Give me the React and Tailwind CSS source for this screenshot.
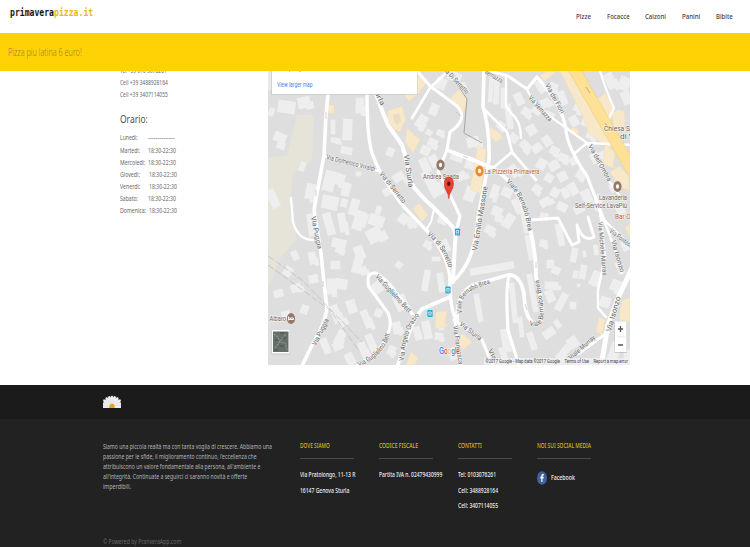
import React, { useLayoutEffect, useRef, useState } from "react";

// Text condensed horizontally to a given width.
function Fit({ w, className = "", children }) {
  const ref = useRef(null);
  const [scale, setScale] = useState(1);
  useLayoutEffect(() => {
    setScale(w / ref.current.offsetWidth);
  }, [w, children]);
  return (
    <span className={"block shrink-0 whitespace-pre " + className} style={{ width: w }}>
      <span ref={ref} className="inline-block origin-left" style={{ transform: `scaleX(${scale})` }}>
        {children}
      </span>
    </span>
  );
}

const nav = [["Pizze", 15], ["Focacce", 22.5], ["Calzoni", 21], ["Panini", 18], ["Bibite", 17]];

const hours = [
  ["Lunedì:", 18, "--------------", 27, 28],
  ["Martedì:", 20, "18:30-22:30", 28, 27.5],
  ["Mercoledì:", 25, "18:30-22:30", 28, 28],
  ["Giovedì:", 20, "18:30-22:30", 28, 28.5],
  ["Venerdì:", 20, "18:30-22:30", 28, 28.5],
  ["Sabato:", 18, "18:30-22:30", 28, 28],
  ["Domenica:", 26, "18:30-22:30", 28, 29],
];

// Buildings: x, y, width, height, angle
const buildings = [
  [270,75,9,11,0],[278,101,17,12,8],[269,108,5,8,20],[298,97,12,11,-12],[274,133,12,9,24],[277,142,8,7,20],
  [356,98,8,15,0],[331,120,4,14,0],[343,119,9,21,3],[331,138,9,5,8],[341,147,11,7,12],
  [324,171,11,20,14],[336,174,8,11,22],[342,183,8,13,14],[300,162,5,9,22],[306,184,9,15,12],[322,196,16,13,12],
  [350,199,8,16,17],[341,199,6,8,14],[269,189,8,19,-25],[387,148,7,8,22],[356,172,5,4,0],[376,206,5,8,16],
  [393,173,11,8,-32],[383,188,9,7,-30],[404,176,8,7,-34],[421,146,9,9,24],[417,115,9,13,34],[430,104,8,11,22],
  [426,130,6,5,32],[428,139,9,8,24],[421,158,8,15,-25],[430,155,8,12,-28],[424,171,8,15,-30],[430,184,13,12,-28],
  [436,78,10,11,20],[437,130,7,6,20],[448,72,13,9,25],[460,83,7,11,-28],
  [467,137,12,10,-12],[451,153,12,8,22],[466,157,9,12,18],[457,172,9,8,-30],[465,187,10,14,20],
  [489,75,4,27,4],[494,80,5,24,3],[501,88,4,20,0],[506,104,6,25,-8],[497,122,8,7,37],[509,134,9,8,40],
  [515,93,8,12,-25],[522,108,9,8,30],[527,125,9,10,-32],[532,108,9,6,35],[541,99,9,8,-25],[545,112,9,8,24],
  [537,80,8,13,-30],[549,83,8,9,28],[559,91,7,14,-20],[569,78,7,13,-24],[575,100,8,12,28],[570,116,8,10,-30],
  [582,118,10,9,25],[587,130,9,9,22],[591,153,8,10,-27],[600,151,9,13,-28],[605,137,6,7,0],[615,111,8,12,-27],
  [622,91,9,13,-24],[606,73,9,16,-27],[619,77,11,13,22],[570,157,7,8,-28],[577,169,8,10,30],[569,183,8,12,-28],
  [582,190,9,13,-25],[594,195,8,13,28],[610,184,6,8,-28],[616,203,8,12,-28],
  [520,142,11,8,45],[532,144,10,8,-38],[543,136,8,10,-35],[550,147,9,8,28],[537,159,9,10,30],[549,161,10,9,-30],
  [559,154,9,8,22],[558,172,9,9,-30],[545,174,8,8,30],[533,185,8,8,35],[551,188,8,9,30],[562,188,7,10,-25],
  [540,198,11,8,-30],[557,203,10,8,26],[574,205,10,8,-28],[510,165,8,12,-35],[502,188,10,9,25],[514,199,6,15,-25],
  [491,185,7,14,20],[492,207,10,9,24],[504,214,9,14,32],[485,226,10,8,30],[495,215,8,7,15],
  [522,207,7,26,-12],[527,235,7,25,-10],[557,224,6,22,-12],[540,213,8,7,12],[540,240,7,7,12],
  [308,214,6,22,-8],[325,213,8,22,-16],[339,213,7,19,-10],[354,211,10,19,17],[369,215,15,11,18],[367,228,15,14,-28],
  [359,213,8,14,18],[399,214,9,10,35],[407,218,7,10,-28],[438,216,9,8,24],[292,251,6,9,-25],[309,252,7,12,-12],
  [284,267,8,9,35],[332,239,14,9,14],[336,245,8,8,17],[355,246,9,13,-20],[353,257,9,16,14],[360,267,7,8,-22],
  [331,261,9,8,0],[309,275,9,8,-12],[327,279,8,15,0],[335,279,12,10,10],[274,290,9,7,-15],[291,284,10,8,-20],
  [301,305,7,9,20],[282,311,8,8,-14],[332,305,8,18,-20],[347,300,9,13,-18],[339,319,9,7,-28],[363,310,7,18,-22],
  [375,309,7,8,25],[322,338,7,16,-22],[336,330,8,15,28],[333,342,10,8,-24],[346,353,8,12,-28],[360,342,7,16,-22],
  [368,334,7,18,-22],[395,295,12,15,-25],[393,322,8,12,-12],[396,262,6,6,40],[423,270,6,21,10],[438,273,6,19,-8],
  [414,327,7,13,-18],[423,321,8,18,-12],[388,346,7,9,24],[373,282,9,11,-36],[432,257,8,4,0],[424,241,7,7,22],
  [441,240,8,12,-25],[438,317,5,13,-12],[435,333,8,7,10],[470,265,44,7,-10],[476,294,5,28,-10],[511,283,5,40,-6],
  [519,317,4,20,-6],[530,274,5,38,-10],[502,329,8,23,-10],[529,332,6,18,-18],[501,347,6,18,-18],
  [545,282,13,7,0],[546,290,8,12,-24],[558,293,7,18,28],[570,302,6,7,0],[547,260,7,8,0],[552,267,8,7,25],
  [571,248,6,14,10],[580,265,6,14,10],[573,271,5,7,10],[583,251,3,6,-10],[594,245,4,10,-8],[591,271,9,15,25],
  [577,284,3,3,0],[543,329,12,8,-35],[555,320,5,8,-35],[560,344,7,17,40],[568,337,10,11,-35],[600,297,10,10,18],
  [611,280,9,11,24],[617,262,6,12,-24],[622,241,6,10,-27],[610,342,8,18,18],[624,350,6,13,0],[449,348,7,12,-22],
];

const tan = [
  "419,76 426,83 418,94 409,101 404,95 412,91 406,85",
  "388,111 402,106 406,119 400,132 394,129 387,119",
  "407,128 420,140 413,153 405,142",
  "327,105 334,105 334,113 327,113",
  "451,98 458,90 467,98 464,112 454,107",
  "490,127 501,134 502,138 496,142 490,136",
  "478,145 486,150 481,194 470,189",
  "540,75 548,71 556,72 544,81",
  "572,127 579,130 578,134 570,131",
  "560,71 568,71 613,144 609,149 588,132 584,119",
  "596,101 605,93 613,104 614,114 605,119",
  "612,114 624,110 625,132 614,131",
  "605,145 615,152 613,168 603,164",
  "610,172 619,166 629,176 629,190 619,187",
  "419,203 428,215 422,222 413,209",
  "436,312 447,311 445,323 448,326 435,329",
  "411,352 418,358 415,365 406,365",
  "462,333 472,342 463,350 458,343",
  "599,317 605,320 602,335 596,332",
  "622,300 630,298 630,322 619,319",
  "625,228 630,224 630,237",
];

const roads = [
  ["M328 94 L326 115 324 155 314 210 Q318 235 321 253 Q324 285 327 308 Q325 324 313 343 L302 366", 3.6],
  ["M367 93 Q367 145 374 158 Q380 175 403 206 L428 232 Q446 252 450 277 Q449 305 456 320", 3.4],
  ["M369 71 Q377 100 388 125 L402 145 Q407 160 410 181 Q416 192 434 208 L450 224 Q457 230 455 243 L453 282", 4],
  ["M324 156 L378 171", 2.6],
  ["M417 71 L430 86 457 106 Q469 119 450 132 L447 150 438 172 450 195 460 216 457 228", 3.1],
  ["M448 71 L430 88 412 118", 2.7],
  ["M484 70 L483 106 Q490 130 489 160 L478 218 Q475 263 452 282", 3.6],
  ["M447 150 L473 160 493 168 Q515 182 523 207 Q536 240 536 277 Q548 322 536 324 Q525 321 524 294 Q520 274 508 275 L473 285 Q456 294 457 323", 3.8],
  ["M510 275 Q505 282 508 330 L519 366", 3.2],
  ["M483 108 L507 132 512 152 536 180 M512 152 L493 168", 2.7],
  ["M490 71 L508 76 527 89 537 77 Q562 105 566 129 Q566 145 587 176 L604 220", 3.1],
  ["M527 89 Q532 105 565 127 L587 143 632 145 M587 143 L575 153", 2.3],
  ["M506 77 L506 106 511 113 Q521 121 521 138", 2.3],
  ["M600 71 Q605 88 614 108 L605 127 M587 143 L606 177 622 199", 2.2],
  ["M530 220 L558 218 572 245 579 242 577 225 Q583 243 594 237 L588 217", 2.8],
  ["M632 268 L619 296 608 325 601 367", 5],
  ["M600 210 L605 257 598 290 598 308 606 317 M599 210 Q612 237 622 273 M600 216 L632 247", 2.4],
  ["M450 297 L422 309 Q413 320 409 334 L397 367", 3.6],
  ["M414 316 L388 282 376 273 Q365 272 369 287 L388 313 Q396 329 376 353 L355 367", 3.1],
  ["M454 320 L482 340 493 366 M455 321 L461 366 M608 332 L578 354", 3],
  ["M434 209 L431 222 426 230", 2],
  ["M291 198 L293 222 Q298 240 313 240", 2.4],
];

// Street labels: path, text, length, font size
const labels = [
  ["M364 71 L384 112", "Via Sturla", 39, 6.8],
  ["M404 155 L409 190", "Via Sturla", 33, 7.2],
  ["M326 159 L377 172", "Via Domenico Vivaldi", 50, 6.8],
  ["M379 174 Q392 190 404 205", "Via di Serretto", 38, 7],
  ["M311 217 L318 251", "Via Puggia", 33, 6.8],
  ["M316 346 L330 318", "Via Puggia", 29, 7],
  ["M427 235 Q444 248 449 270", "Via di Serretto", 40, 7],
  ["M375 277 L410 315", "Via Guglielmo Bett", 49, 7],
  ["M359 367 Q390 352 390 328", "Via Guglielmo Bett", 47, 7],
  ["M404 361 Q406 326 423 312", "Via Angelo Orazio", 49, 7],
  ["M477 251 L488 184", "Via Emilio Massone", 65, 7.2],
  ["M442 69 L467 95", "Via Di Serretto", 35, 6.6],
  ["M484 73 L503 84", "Vernazza", 20, 6.5],
  ["M528 98 L550 123", "Via Vernazza", 32, 6.8],
  ["M545 85 L562 116", "Via dei Fiori", 33, 6.8],
  ["M588 146 L609 184", "Via dell'Ombra", 41, 6.6],
  ["M506 182 Q524 198 528 232", "Viale Bernabò Brea", 55, 6.8],
  ["M462 313 Q457 291 490 284", "Viale Bernabò Brea", 46, 6.8],
  ["M529 325 C548 331 545 310 539 281", "Viale Bernabò Brea", 57, 6.6],
  ["M459 325 L481 342", "Via Sturla", 26, 6.8],
  ["M453 326 L459 367", "Via Francesca", 39, 6.8],
  ["M598 222 L603 279", "Via Michele Marras", 54, 6.5],
  ["M609 232 L636 252", "Via Pontedera", 32, 6.6],
  ["M611 241 L621 275", "Via Isonzo", 33, 6.8],
  ["M611 332 L621 296", "Via Isonzo", 36, 7.4],
  ["M571 360 L597 337", "Viale Murray", 33, 6.5],
  ["M488 350 L496 366", "Via", 12, 6.5],
];

const googleLetters = [["G", "#4285f4", 439, 5], ["o", "#ea4335", 443.9, 3.7], ["o", "#fbbc05", 447.6, 3.7], ["g", "#4285f4", 451.2, 3.7], ["l", "#34a853", 454.8, 1.6], ["e", "#ea4335", 456.3, 3.4]];

function Label({ x, y, w, children, fill = "#75624f", size = 7.3 }) {
  return (
    <text x={x} y={y} textLength={w} lengthAdjust="spacingAndGlyphs" fontSize={size} fill={fill}
      stroke="#f7f7f7" strokeWidth="1.1" paintOrder="stroke">{children}</text>
  );
}

function Place({ x, y, fill = "#957866", children }) {
  return (
    <g transform={`translate(${x} ${y})`}>
      <ellipse rx="4.1" ry="5.4" fill={fill} />
      {children || <ellipse rx="1.6" ry="2.3" fill="#fff" />}
    </g>
  );
}

function StreetMap() {
  return (
    <svg className="block h-[294px] w-[362px]" viewBox="268 71 362 294" fontFamily="Roboto, sans-serif">
      <rect x="268" y="71" width="362" height="294" fill="#dedede" />
      <path d="M297 115 H314 L312 160 293 173 289 210 297 239 281 257 268 287 V157 L287 156 Z" fill="#e6e4d8" />
      {buildings.map(([x, y, w, h, a], i) => (
        <g key={i} fill="#eeeeee" transform={`rotate(${a} ${x + w / 2} ${y + h / 2})`}>
          <rect x={x - 0.3} y={y - 0.3} width={w + 0.6} height={h + 0.6} />
          {i % 3 === 0 && w > 6 && h < 20 && <rect x={x + w * 0.6} y={y + h * 0.5} width={w * 0.65} height={h * 0.7} />}
        </g>
      ))}
      {tan.map((p, i) => <polygon key={i} points={p} fill="#f8e8ca" stroke="#f2dcb4" strokeWidth=".5" />)}
      <path d="M393 115 L399 113 401 121 397 125 394 121Z" fill="#e9dcc2" />
      <g fill="none" stroke="#fff" strokeLinejoin="round" strokeLinecap="round">
        {roads.map(([d, w], i) => <path key={i} d={d} strokeWidth={w} />)}
      </g>
      <path d="M573 67 L636 177" fill="none" stroke="#f2d27c" strokeWidth="12" />
      <path d="M573 67 L636 177" fill="none" stroke="#fee197" strokeWidth="10.6" />
      <path d="M586 87 l4 6 M605 123 l4 6" stroke="#9d927b" strokeWidth=".7" />
      <g fill="none" stroke="#b4b4b4" strokeWidth=".6">
        <path d="M268 256 L302 280 362 342 M268 265 L330 310 359 351" strokeDasharray="7 2" />
        <path d="M457 84 L467 99 464 133 482 143" stroke="#a0a09a" strokeWidth=".9" />
        <path d="M326 112 v7 M316 190 v6 M323 281 v6 M456 112 l5 4 M463 156 l5 2 M536 262 v6 M525 304 l2 6" />
      </g>
      <g fill="#686868" stroke="#f2f2f2" strokeWidth="1" paintOrder="stroke">
        {labels.map(([d, text, len, size], i) => (
          <g key={i}>
            <path id={"street" + i} d={d} fill="none" stroke="none" />
            <text fontSize={size}>
              <textPath href={"#street" + i} textLength={len} lengthAdjust="spacingAndGlyphs">{text}</textPath>
            </text>
          </g>
        ))}
      </g>
      <Place x={440.5} y={165} />
      <Place x={479.5} y={171} fill="#f0882a" />
      <Place x={617.5} y={186.5} />
      <Place x={291} y={318.5}>
        <path d="M-2.4 -2 V2 M-2.4 1 H2.5 V-.5 H-.5 V1 M-1.5 -.5 h.7" stroke="#fff" strokeWidth="1" fill="none" />
      </Place>
      <Label x={423} y={179} w={36}>Andrea Spada</Label>
      <Label x={484.5} y={174} w={55} fill="#b8662c">La Pizzeria Primavera</Label>
      <Label x={604} y={131} w={39}>Chiesa Santa</Label>
      <Label x={620} y={139} w={20}>di Vill</Label>
      <Label x={599} y={200} w={28}>Lavanderia</Label>
      <Label x={575} y={207.5} w={52}>Self-Service LavaPiù</Label>
      <Label x={615} y={218.5} w={25} fill="#b8662c">Bar Oper</Label>
      <Label x={269.5} y={321} w={16.5}>Albaro</Label>
      {[[457.5, 232], [448, 290], [430, 313.5]].map(([x, y], i) => (
        <g key={i} transform={`translate(${x} ${y})`}>
          <rect x="-2.6" y="-3.4" width="5.2" height="6.8" rx=".7" fill="#27a9d5" />
          <path d="M-1.2 -1.5 H1.2 V.8 H-1.2 Z M-1.4 2.1 h.8 M.6 2.1 h.8" fill="none" stroke="#fff" strokeWidth=".7" />
        </g>
      ))}
      <path d="M448.8 198.5 C448.5 192 444.3 190 444.3 184 C444.3 179.5 446 177.3 448.8 177.3 C451.6 177.3 453.4 179.5 453.4 184 C453.4 190 449.1 192 448.8 198.5Z" fill="#ea4335" stroke="#b42b24" strokeWidth=".6" />
      <ellipse cx="448.8" cy="183.7" rx="1.7" ry="2.2" fill="#64120d" />
      <rect x="268" y="71" width="4" height="19" fill="#e9e9e9" />
      <rect x="271" y="71" width="146.6" height="24" fill="#bbb" opacity=".5" />
      <rect x="272" y="71" width="145" height="23" fill="#fff" />
      <path d="M289 71 h1 M300 71 v1" stroke="#777" strokeWidth=".8" />
      <text x="277" y="87" textLength="35.5" lengthAdjust="spacingAndGlyphs" fontSize="7.4" fill="#427fed">View larger map</text>
      <rect x="271.5" y="330" width="18.5" height="24.5" rx="1" fill="#aaa" opacity=".5" />
      <rect x="272" y="330" width="17.5" height="23.5" rx=".5" fill="#fff" />
      <rect x="273" y="331.5" width="15.5" height="20.5" fill="#65706b" />
      <g strokeWidth="1.1" fill="none">
        <path d="M274 334 l4 3 2 5 5 1 2 7 M275 348 l6-8 5-6" stroke="#8f9490" strokeDasharray="2 1" />
        <path d="M275 340 h3 M279 346 h5 M283 338 h3 M274 350 h4 M280 333 h4" stroke="#46564c" />
      </g>
      <rect x="614.5" y="322" width="12.5" height="31" fill="#aaa" opacity=".5" />
      <rect x="615" y="321.5" width="11.5" height="30.5" fill="#fff" />
      <path d="M617 336.8 h8" stroke="#e2e2e2" strokeWidth=".7" />
      <path d="M618 329 h5 M620.5 326 v6 M618 345 h5" stroke="#555" strokeWidth="1.3" />
      <g fontSize="8.4" fontWeight="500" stroke="#fff" strokeWidth=".8" paintOrder="stroke">
        {googleLetters.map(([c, fill, x, w]) => (
          <text key={x} x={x} y="354" textLength={w} lengthAdjust="spacingAndGlyphs" fill={fill}>{c}</text>
        ))}
      </g>
      <rect x="484" y="358" width="146" height="7" fill="#f2f2f2" opacity=".75" />
      <g fontSize="5.6" fill="#444">
        <text x="485.5" y="363.4" textLength="74.5" lengthAdjust="spacingAndGlyphs">©2017 Google - Map data ©2017 Google</text>
        <text x="564.5" y="363.4" textLength="24.5" lengthAdjust="spacingAndGlyphs">Terms of Use</text>
        <text x="593.5" y="363.4" textLength="34.5" lengthAdjust="spacingAndGlyphs">Report a map error</text>
      </g>
    </svg>
  );
}

function Daisy() {
  return (
    <svg className="block h-[13px] w-[18px]" viewBox="0 0 18 13">
      {[-88, -70, -50, -32, -16, 0, 16, 32, 50, 70, 88].map((a) => (
        <ellipse key={a} cx="9" cy="6" rx="1.7" ry="5.3" fill="#f2f2f2" stroke="#bdbdbd" strokeWidth=".25" transform={`rotate(${a} 9 12)`} />
      ))}
      <path d="M6.4 13 V11 Q6.7 8.8 9 8.8 Q11.3 8.8 11.6 11 V13Z" fill="#e5a51d" />
    </svg>
  );
}

function Column({ title, w, children }) {
  return (
    <div className="w-[78.9px] shrink-0">
      <Fit w={w} className="h-[14px] text-[7.5px] font-medium leading-[14px] text-[#dcb90a]">{title}</Fit>
      <div className="mt-[6px] h-px w-[54px] bg-[#4a4a4a]" />
      {children}
    </div>
  );
}

function Lines({ items }) {
  return (
    <div className="mt-[8px] text-[7px] font-medium leading-[15.6px] text-[#f0f0f0]">
      {items.map(([t, w]) => <Fit key={t} w={w} className="h-[15.6px]">{t}</Fit>)}
    </div>
  );
}

const about = [
  ["Siamo una piccola realtà ma con tanta voglia di crescere. Abbiamo una", 168.5],
  ["passione per le sfide, il miglioramento continuo, l'eccellenza che", 153.5],
  ["attribuiscono un valore fondamentale alla persona, all'ambiente e", 157.5],
  ["all'integrità. Continuate a seguirci ci saranno novità e offerte", 144],
  ["imperdibili.", 28],
];

export default function App() {
  return (
    <div className="flex h-[547px] w-[750px] flex-col overflow-hidden bg-white font-['Noto_Sans',sans-serif]">
      <header className="flex h-[33px] shrink-0 justify-between pl-[10px] pr-[17px]">
        <div className="flex pt-[4px] font-['DejaVu_Sans_Mono',monospace] text-[10.5px] font-bold leading-[16px]">
          <Fit w={44} className="text-[#161616]">primavera</Fit>
          <Fit w={39.5} className="text-[#efb51c]">pizza.it</Fit>
        </div>
        <nav className="flex gap-[16px] pt-[9px] text-[7.5px] font-medium leading-[14px] text-[#444]">
          {nav.map(([t, w]) => <Fit key={t} w={w}>{t}</Fit>)}
        </nav>
      </header>
      <div className="flex h-[38px] shrink-0 items-center bg-[#ffd205] pl-[8px] text-[10px] text-[#937f38]">
        <Fit w={74} className="font-light">Pizza piu latina 6 euro!</Fit>
      </div>
      <main className="flex h-[314px] shrink-0 overflow-hidden pl-[120px]">
        <section className="-mt-[6px] w-[148px] text-[6.8px] leading-[12.2px] text-[#686868]">
          <Fit w={47} className="h-[12px]">Tel +39 010 3076261</Fit>
          <Fit w={48} className="h-[12.2px]">Cell +39 3488928164</Fit>
          <Fit w={48} className="h-[12.2px]">Cell +39 3407114055</Fit>
          <Fit w={28} className="mt-[8.6px] h-[18px] text-[11.5px] leading-[18px] text-[#505050]">Orario:</Fit>
          <div className="mt-[4.4px]">
            {hours.map(([day, dw, time, tw, start]) => (
              <div key={day} className="flex h-[12.15px]">
                <div className="shrink-0" style={{ width: start }}><Fit w={dw}>{day}</Fit></div>
                <Fit w={tw}>{time}</Fit>
              </div>
            ))}
          </div>
        </section>
        <StreetMap />
      </main>
      <footer className="flex grow flex-col bg-[#222]">
        <div className="h-[34px] shrink-0 bg-[#1b1b1b] pl-[103px] pt-[10px]"><Daisy /></div>
        <div className="flex h-[117px] shrink-0 pl-[103px] pt-[19px]">
          <div className="w-[197px] shrink-0 pt-[4px] text-[7px] leading-[10px] text-[#b5b5b5]">
            {about.map(([t, w]) => <Fit key={t} w={w} className="h-[10px]">{t}</Fit>)}
          </div>
          <Column title="DOVE SIAMO" w={30}>
            <Lines items={[["Via Pratolongo, 11-13 R", 55], ["16147 Genova Sturla", 49.5]]} />
          </Column>
          <Column title="CODICE FISCALE" w={39}>
            <Lines items={[["Partita IVA n. 02479430999", 63]]} />
          </Column>
          <Column title="CONTATTI" w={24}>
            <Lines items={[["Tel: 0103076261", 38], ["Cell: 3488928164", 40], ["Cell: 3407114055", 40]]} />
          </Column>
          <Column title="NOI SUI SOCIAL MEDIA" w={54}>
            <div className="mt-[12px] flex items-center gap-[4px] text-[7px] font-medium leading-[14px] text-[#f0f0f0]">
              <svg className="h-[14px] w-[10px]" viewBox="0 0 10 14">
                <ellipse cx="5" cy="7" rx="5" ry="6.7" fill="#3f5f9e" />
                <path d="M4.3 11 V7.4 H3.3 V5.8 H4.3 V4.8 Q4.3 2.9 5.8 2.9 H6.8 V4.4 H6.1 Q5.5 4.4 5.5 5 V5.8 H6.7 L6.5 7.4 H5.5 V11Z" fill="#fff" />
              </svg>
              <Fit w={24}>Facebook</Fit>
            </div>
          </Column>
        </div>
        <div className="pl-[103px] text-[7px] leading-[12px] text-[#686868]">
          <Fit w={78}>© Powered by PranveraApp.com</Fit>
        </div>
      </footer>
    </div>
  );
}
